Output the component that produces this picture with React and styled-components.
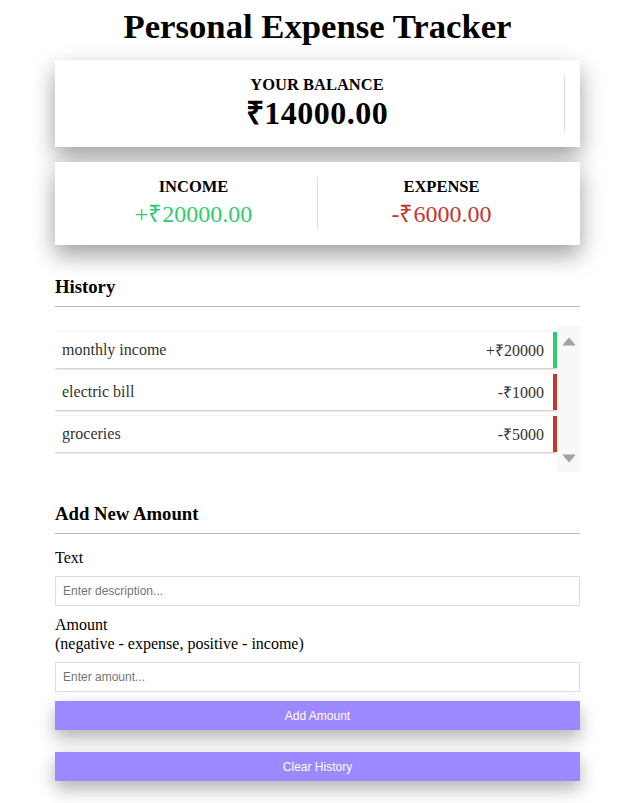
import React from "react";
import styled, { createGlobalStyle } from "styled-components";

const transactions = [
  { id: 1, text: "monthly income", amount: 20000 },
  { id: 2, text: "electric bill", amount: -1000 },
  { id: 3, text: "groceries", amount: -5000 },
];

const App = () => {
  return (
    <Page>
      <GlobalStyle />
      <Container>
        <Title>Personal Expense Tracker</Title>

        <Card>
          <Cell>
            <CardLabel>Your Balance</CardLabel>
            <Balance>₹14000.00</Balance>
          </Cell>
        </Card>

        <Card $gap>
          <Cell>
            <CardLabel>Income</CardLabel>
            <Money $plus>+₹20000.00</Money>
          </Cell>
          <Cell $last>
            <CardLabel>Expense</CardLabel>
            <Money>-₹6000.00</Money>
          </Cell>
        </Card>

        <Heading>History</Heading>
        <ListWrap>
          <List>
            {transactions.map((t) => (
              <Item key={t.id} $plus={t.amount > 0}>
                <span>{t.text}</span>
                <span>
                  {t.amount > 0 ? "+" : "-"}₹{Math.abs(t.amount)}
                </span>
              </Item>
            ))}
          </List>
          <Track>
            <svg width="14" height="9" viewBox="0 0 14 9">
              <path d="M7 1 L13 8 L1 8 Z" fill="#a3a3a3" stroke="#a3a3a3" strokeLinejoin="round" />
            </svg>
            <svg width="14" height="9" viewBox="0 0 14 9">
              <path d="M1 1 L13 1 L7 8 Z" fill="#a3a3a3" stroke="#a3a3a3" strokeLinejoin="round" />
            </svg>
          </Track>
        </ListWrap>

        <Heading $top>Add New Amount</Heading>
        <Form onSubmit={(e) => e.preventDefault()}>
          <Label htmlFor="text">Text</Label>
          <Input id="text" placeholder="Enter description..." />
          <Label htmlFor="amount" $top>
            Amount
            <br />
            (negative - expense, positive - income)
          </Label>
          <Input id="amount" type="number" placeholder="Enter amount..." />
          <Button type="submit">Add Amount</Button>
          <Button type="button" $clear>
            Clear History
          </Button>
        </Form>
      </Container>
    </Page>
  );
};

export default App;

const GlobalStyle = createGlobalStyle`
  * { box-sizing: border-box; }
  body {
    margin: 0;
    background: #fff;
    font-family: "Liberation Serif", "Times New Roman", serif;
    color: #000;
  }
`;

const Page = styled.div`
  padding-left: 5px;
  padding-bottom: 30px;
`;

const Container = styled.div`
  width: 525px;
  margin: 0 auto;
`;

const Title = styled.h2`
  margin: 7px 0 14px;
  text-align: center;
  font-size: 34.7px;
  line-height: 39px;
  font-weight: bold;
`;

const Card = styled.div`
  display: flex;
  background: #fff;
  padding: 15px;
  margin-top: ${(p) => (p.$gap ? "15px" : "0")};
  box-shadow: 0 10px 22px rgba(0, 0, 0, 0.38);
`;

const Cell = styled.div`
  flex: 1;
  text-align: center;
  border-right: ${(p) => (p.$last ? "0" : "1px solid #dedede")};
`;

const CardLabel = styled.h4`
  margin: 0;
  font-size: 16.5px;
  text-transform: uppercase;
  line-height: 19px;
`;

const Balance = styled.h1`
  margin: 0;
  font-size: 32px;
  line-height: 38px;
  letter-spacing: 0.5px;
`;

const Money = styled.p`
  margin: 3px 0 0;
  font-size: 24px;
  line-height: 31px;
  color: ${(p) => (p.$plus ? "#2ecc71" : "#c0392b")};
`;

const Heading = styled.h3`
  margin: 31px 0 0;
  padding-bottom: 8px;
  font-size: 18.72px;
  border-bottom: 1px solid #bbb;
`;

const ListWrap = styled.div`
  display: flex;
  height: 146px;
  margin-top: 19px;
`;

const List = styled.ul`
  flex: 1;
  list-style: none;
  margin: 0;
  padding: 6px 0 0;
  display: flex;
  flex-direction: column;
  gap: 6px;
  overflow: hidden;
`;

const Item = styled.li`
  display: flex;
  justify-content: space-between;
  align-items: center;
  height: 36px;
  padding: 0 9px 0 7px;
  background: #fff;
  font-size: 16px;
  color: #333;
  border-right: 4px solid ${(p) => (p.$plus ? "#2ecc71" : "#c0392b")};
  box-shadow: 0 1px 2px rgba(0, 0, 0, 0.25), 0 -1px 1px rgba(0, 0, 0, 0.03);
`;

const Track = styled.div`
  width: 23px;
  background: #f8f8f8;
  display: flex;
  flex-direction: column;
  justify-content: space-between;
  align-items: center;
  padding: 11px 0 9px;
`;

const Form = styled.form`
  display: flex;
  flex-direction: column;
`;

const Label = styled.label`
  margin: ${(p) => (p.$top ? "9px 0 9px" : "14px 0 9px")};
  font-size: 16px;
  line-height: 19px;
`;

const Input = styled.input`
  width: 100%;
  height: 30px;
  padding: 0 7px;
  border: 1px solid #dedede;
  font-family: "Liberation Sans", Arial, sans-serif;
  font-size: 12px;
  outline: none;

  &::placeholder {
    color: #757575;
  }
`;

const Button = styled.button`
  width: 100%;
  height: 29px;
  margin-top: ${(p) => (p.$clear ? "22px" : "9px")};
  border: 0;
  background: #9c88ff;
  color: #fff;
  font-family: "Liberation Sans", Arial, sans-serif;
  font-size: 12px;
  box-shadow: 0 8px 18px rgba(0, 0, 0, 0.3);
  cursor: pointer;
`;
